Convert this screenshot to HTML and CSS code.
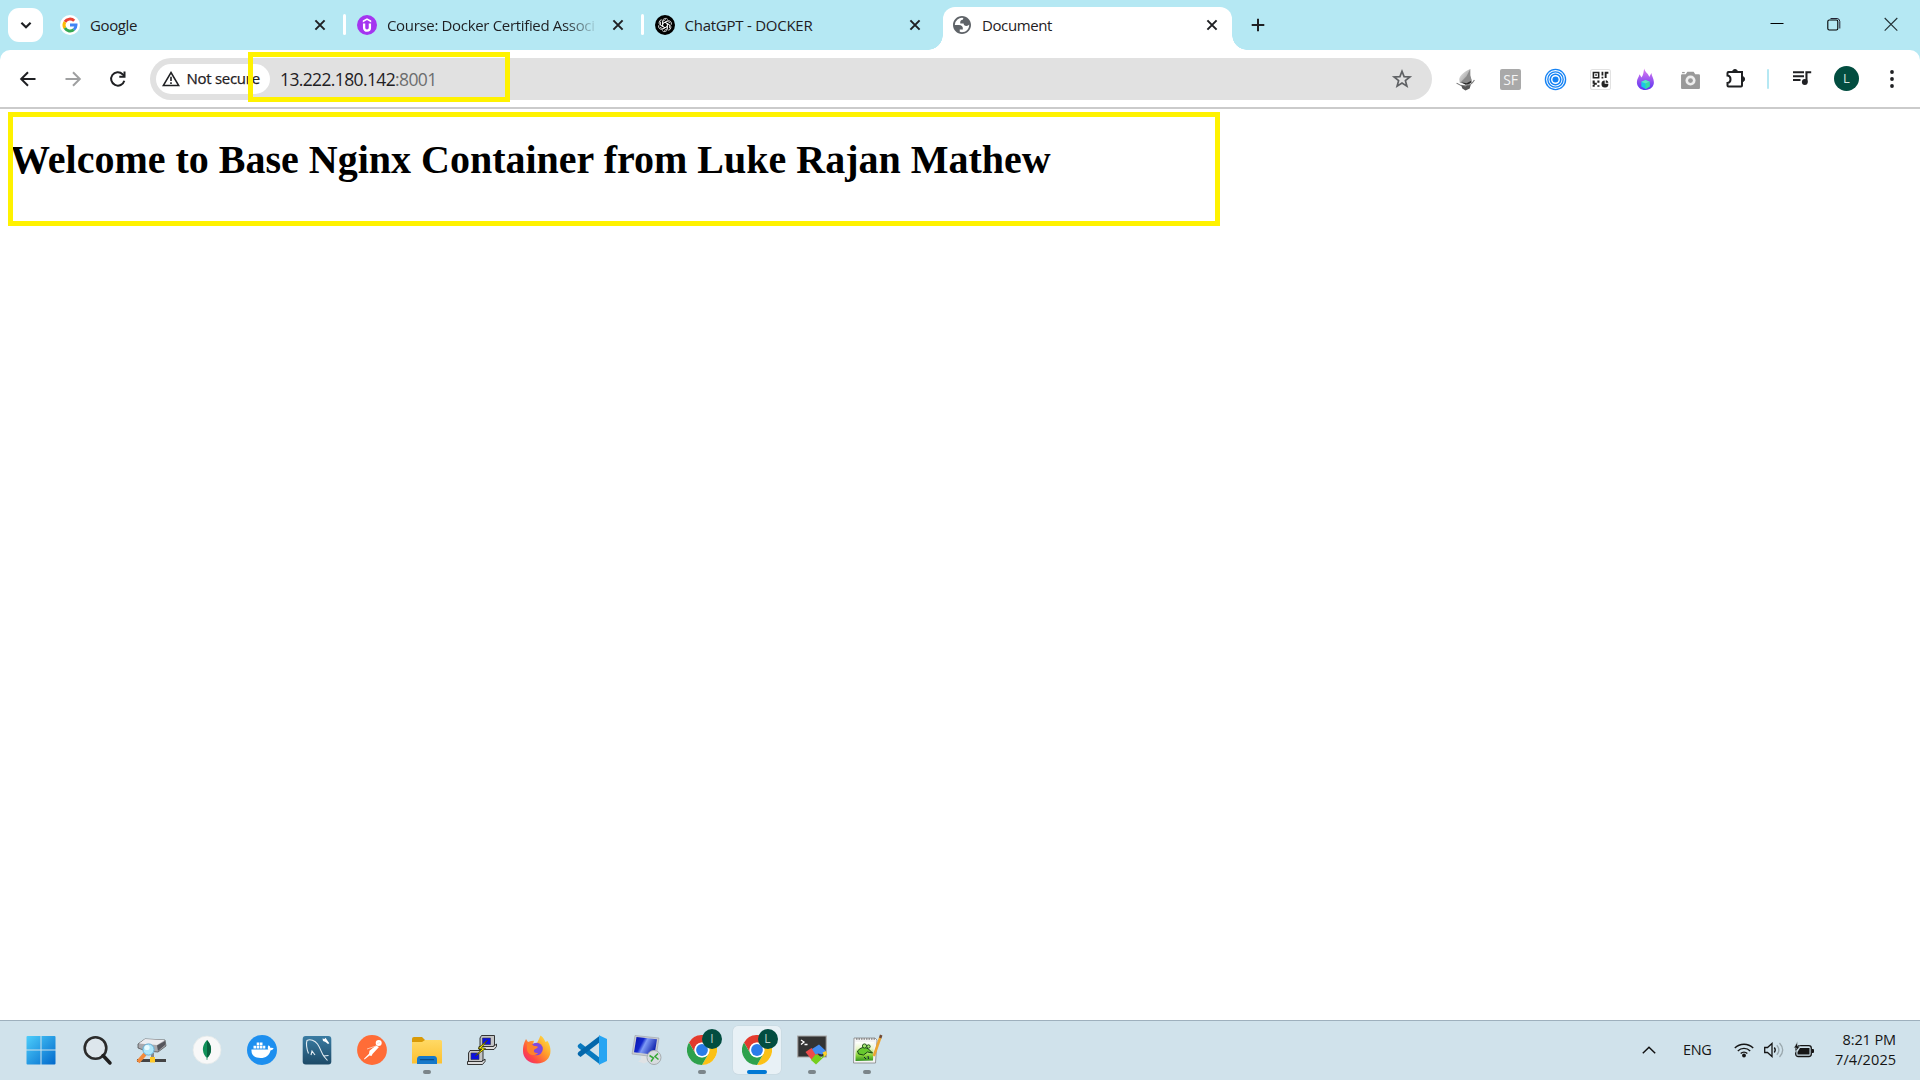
FILE: index.html
```html
<!DOCTYPE html>
<html lang="en">
<head>
<meta charset="utf-8">
<title>Document</title>
<link rel="stylesheet" href="styles.css">
</head>
<body>
<svg class="defs" width="0" height="0" aria-hidden="true">
  <defs>
    <symbol id="x" viewBox="0 0 20 20"><path d="M5.4 5.4l9.2 9.2M14.6 5.4l-9.2 9.2" stroke="#1f2023" stroke-width="2" fill="none"/></symbol>
    <symbol id="chrome" viewBox="0 0 30 30">
      <circle cx="15" cy="15" r="15" fill="#fff"/>
      <path d="M2 7.5A15 15 0 0 1 28 7.5H15A7.5 7.5 0 0 0 8.5 18.8z" fill="#e33b2e"/>
      <path d="M28 7.5A15 15 0 0 1 15 30l6.5-11.3A7.5 7.5 0 0 0 15 7.5z" fill="#fbc116"/>
      <path d="M15 30A15 15 0 0 1 2 7.5l6.5 11.3a7.5 7.5 0 0 0 13 0z" fill="#2da14c"/>
      <circle cx="15" cy="15" r="7.3" fill="#fff"/><circle cx="15" cy="15" r="5.9" fill="#2b7de9"/>
    </symbol>
    <linearGradient id="gWin" gradientUnits="userSpaceOnUse" x1="0" y1="0" x2="30" y2="30"><stop offset="0" stop-color="#4fd0fc"/><stop offset="1" stop-color="#0067cb"/></linearGradient>
    <linearGradient id="gFire" x1="0" y1="0" x2="0" y2="1"><stop offset="0" stop-color="#e07bf0"/><stop offset="1" stop-color="#5a35f0"/></linearGradient>
    <linearGradient id="gFolder" x1="0" y1="0" x2="0" y2="1"><stop offset="0" stop-color="#ffd965"/><stop offset="1" stop-color="#fcc02f"/></linearGradient>
    <linearGradient id="gSql" x1="0" y1="0" x2="0" y2="1"><stop offset="0" stop-color="#3a7ca3"/><stop offset="1" stop-color="#1d4a67"/></linearGradient>
    <linearGradient id="gFox" x1="1" y1="0" x2="0" y2="1"><stop offset="0" stop-color="#fff04a"/><stop offset=".4" stop-color="#ffa02a"/><stop offset=".72" stop-color="#ff4a42"/><stop offset="1" stop-color="#e9208a"/></linearGradient>
    <linearGradient id="gScreen" x1="0" y1="0" x2="1" y2=".4"><stop offset="0" stop-color="#0712a8"/><stop offset=".4" stop-color="#1226cc"/><stop offset=".55" stop-color="#7f9bf5"/><stop offset="1" stop-color="#1528b0"/></linearGradient>
    <linearGradient id="gGray" x1="0" y1="0" x2="1" y2="1"><stop offset="0" stop-color="#f4f4f4"/><stop offset="1" stop-color="#777"/></linearGradient>
    <linearGradient id="gPaper" x1="0" y1="0" x2="0" y2="1"><stop offset="0" stop-color="#fff"/><stop offset=".35" stop-color="#e9f5c9"/><stop offset=".7" stop-color="#8ad43a"/><stop offset="1" stop-color="#2f8f1c"/></linearGradient>
  </defs>
</svg>

<header class="tabstrip">
  <button class="tab-search"><svg width="20" height="20" viewBox="0 0 20 20"><path d="M5.4 7.8l4.600 4.400 4.600-4.400" fill="none" stroke="#1f2023" stroke-width="2.200"/></svg></button>
  <nav class="tabs">
    <div class="tab">
      <svg class="favicon" viewBox="0 0 20 20"><circle cx="10" cy="10" r="10" fill="#fff"/><g fill="none" stroke-width="3"><path d="M4.900 6.900A6 6 0 0 1 14.200 5.800" stroke="#ea4335"/><path d="M4.900 13.100A6 6 0 0 1 4.900 6.900" stroke="#fbbc05"/><path d="M4.900 13.100A6 6 0 0 0 13.900 14.600" stroke="#34a853"/><path d="M10 10h6a6 6 0 0 1-2.100 4.600" stroke="#4285f4"/></g></svg>
      <span class="tab-title">Google</span><svg class="close"><use href="#x"/></svg>
    </div>
    <div class="tab divided">
      <svg class="favicon" viewBox="0 0 20 20"><circle cx="10" cy="10" r="10" fill="#a435f0"/><path d="M5.800 5.600L10 3.200l4.200 2.400v1.800L10 5.100 5.800 7.400z" fill="#fff"/><path d="M7.100 8.600v4.200a2.900 2.900 0 0 0 5.800 0V8.600" fill="none" stroke="#fff" stroke-width="2.300"/></svg>
      <span class="tab-title fade">Course: Docker Certified Associ</span><svg class="close"><use href="#x"/></svg>
    </div>
    <div class="tab divided">
      <svg class="favicon" viewBox="0 0 20 20"><circle cx="10" cy="10" r="10" fill="#000"/><g fill="none" stroke="#fff" stroke-width=".75"><path id="petal" d="M7.600 11.400V6.200a2.900 2.900 0 0 1 5.300-1.600M7.600 8.700l4.500-2.600 3 1.700"/><use href="#petal" transform="rotate(60 10 10)"/><use href="#petal" transform="rotate(120 10 10)"/><use href="#petal" transform="rotate(180 10 10)"/><use href="#petal" transform="rotate(240 10 10)"/><use href="#petal" transform="rotate(300 10 10)"/></g></svg>
      <span class="tab-title chat">ChatGPT - DOCKER</span><svg class="close"><use href="#x"/></svg>
    </div>
    <div class="tab active">
      <svg class="favicon" viewBox="0 0 20 20"><path transform="translate(-.8 -.8) scale(.9)" fill-rule="evenodd" fill="#5f6368" d="M12 2C6.480 2 2 6.480 2 12s4.480 10 10 10 10-4.480 10-10S17.520 2 12 2zM4 12h4.400c3.407.022 4.922 1.730 4.543 5.127H9.488v2.470a8.004 8.004 0 0 0 10.498-8.083C19.327 12.504 18.332 13 17 13c-2.137 0-3.206-.916-3.206-2.750h-3.748c-.274-2.728.683-4.092 2.870-4.092 0-.975.327-1.597.811-1.970A8 8 0 0 0 4 12z"/></svg>
      <span class="tab-title doc">Document</span><svg class="close"><use href="#x"/></svg>
    </div>
  </nav>
  <button class="new-tab"><svg width="20" height="20" viewBox="0 0 20 20"><path d="M10 3.700v12.600M3.700 10h12.600" stroke="#1f2023" stroke-width="2"/></svg></button>
  <div class="window-controls">
    <svg viewBox="0 0 14 14"><path d="M.5 6.500h13" stroke="#000"/></svg>
    <svg viewBox="0 0 14 14"><path d="M3.500 1.500H10A3 3 0 0 1 12.800 4.500v7" fill="none" stroke="#223"/><rect x=".8" y="3" width="10" height="10" rx="1.500" fill="none" stroke="#000" stroke-width="1.100"/></svg>
    <svg viewBox="0 0 14 14"><path d="M.7 1l12.600 12.600M13.300 1L.7 13.600" stroke="#223034" stroke-width="1.100"/></svg>
  </div>
</header>

<section class="toolbar">
  <div class="nav-buttons">
    <svg viewBox="0 0 20 20"><path d="M17.500 10H3.500M10 3.200L3.200 10l6.800 6.800" fill="none" stroke="#1f2023" stroke-width="2"/></svg>
    <svg viewBox="0 0 20 20"><path d="M2.500 10h14M10 3.200l6.800 6.800-6.800 6.800" fill="none" stroke="#9fa0a1" stroke-width="2"/></svg>
    <svg viewBox="0 0 20 20"><path d="M16.300 11.700A6.700 6.700 0 1 1 14.600 5.200L16.500 7" fill="none" stroke="#1f2023" stroke-width="2"/><path d="M17.500 2.500v6.200h-6.200V6.800h4.200V2.500z" fill="#1f2023"/></svg>
  </div>
  <div class="omnibox">
    <div class="chip"><svg width="18" height="16" viewBox="0 0 18 16"><path d="M9 1.500L16.700 14.600H1.300z" fill="none" stroke="#1f2023" stroke-width="1.500"/><path d="M9 5.800v4.200M9 11.200v1.700" stroke="#1f2023" stroke-width="1.600"/></svg><span>Not secure</span></div>
    <div class="url">13.222.180.142<span>:8001</span></div>
    <svg class="star" viewBox="0 0 20 20"><path d="M10 2.300l2.100 5.300 5.800.4-4.500 3.600 1.500 5.600-4.900-3.100-4.900 3.100 1.500-5.600L2.100 8l5.800-.4z" fill="none" stroke="#5f6164" stroke-width="1.700"/></svg>
  </div>
  <div class="extensions">
    <svg viewBox="0 0 20 20"><path d="M14.500 0C9 2.500 5 5.500 4 9.500L4.500 13l8 2 3.500-3-1.500-5z" fill="url(#gGray)"/><path d="M14.500 0L11 7l-6 6 6 1 5-3-1.500-5z" fill="#8b8b8b"/><path d="M1.500 13.500q4 3 9 2.500t8-5.500" fill="none" stroke="#777" stroke-width="1"/><path d="M6 12.500l5 1 4-2 1 1-3 2-3 .5z" fill="#2c2c2c"/><path d="M6 16l4 .5 5-1.500-1 3.500-4 2-3-2z" fill="#555"/></svg>
    <div class="sf">SF</div>
    <svg viewBox="0 0 20 20"><g fill="none" stroke="#1683f4" stroke-width="1.300"><circle cx="10" cy="10" r="9.600"/><circle cx="10" cy="10" r="7.300"/><circle cx="10" cy="10" r="5" stroke-width="1.500"/></g><circle cx="10" cy="10" r="2.900" fill="#1683f4"/></svg>
    <svg viewBox="0 0 20 20"><rect x=".5" y=".5" width="19" height="19" rx="2" fill="#fff" stroke="#e2e2e2"/><g fill="#222"><path d="M2.500 2.500h6.500v6.500H2.500zM4 4v3.500h3.500V4z" fill-rule="evenodd"/><path d="M5 5h1.500v1.500H5zM11 2.500h1.700v3.800H11zM14 2.500h3.500v2h-1.700v4H14zM11 7.300h1.700V9H11zM2.500 11h2v2h2v2h-2v2h-2v-2h1v-1h-1zM7 11h2v2H7zM7 15.500h2V17H7z"/><path d="M14 11v3h3.500a3.300 3.300 0 1 1-3.500-3zM15 10.700c1.500.2 2.300 1 2.500 2.300H15z"/></g></svg>
    <svg viewBox="0 0 20 20"><path d="M8.700-.5C9.500 3 13 4.500 13.500 7.500l2.200-3.800c0 3 2.300 5 2.300 9 0 4.300-3.500 7.300-8 7.300s-8.200-3-8.200-7.500c0-3 1.700-4.300 2.500-7.500l1.900 3C8 5.500 8.200 3 8.700-.5z" fill="url(#gFire)"/><path d="M6 12.200l4-1.700 4 1.700v4.500L10 19l-4-2.300z" fill="#19c6e6"/><path d="M6 12.200l4 1.500 4-1.500-4-1.700z" fill="#5fe8c0"/><path d="M10 13.700V19l4-2.300v-4.500z" fill="#38dca0"/></svg>
    <svg viewBox="0 0 20 20"><path d="M2 5h3.500L7 2.500h6L14.500 5H18q1 0 1 1v12q0 1-1 1H2q-1 0-1-1V6q0-1 1-1z" fill="#999"/><circle cx="10" cy="11" r="4.800" fill="#eee"/><circle cx="10" cy="11" r="2.300" fill="#999"/><path d="M2 2.800h2.500V4H2z" fill="#999"/></svg>
    <svg class="puzzle" viewBox="0 0 22 22"><path d="M3.500 4H17v13.500q0 1-1 1H3.500q-1 0-1-1V15c4-.5 4-7 0-7.500V5q0-1 1-1z" fill="none" stroke="#1f2023" stroke-width="2"/><path d="M7.500 4a2.500 2.500 0 0 1 5 0zM17 8.500a2.600 2.600 0 0 1 0 5.200z" fill="#1f2023" stroke="#1f2023"/></svg>
  </div>
  <div class="profile">
    <i class="divider"></i>
    <svg class="media" viewBox="0 0 20 20"><path d="M1 3.300h11M1 7.200h11M1 11h7.500" stroke="#1f2023" stroke-width="2"/><path d="M13.400 2.300h5.800v2h-3.700v9.200h-2z" fill="#1f2023"/><circle cx="12.800" cy="13" r="2.900" fill="#1f2023"/></svg>
    <div class="avatar">L</div>
    <svg class="menu" viewBox="0 0 20 20"><g fill="#1f2023"><circle cx="10" cy="3" r="1.900"/><circle cx="10" cy="10" r="1.900"/><circle cx="10" cy="17" r="1.900"/></g></svg>
  </div>
</section>

<main class="page">
  <h1>Welcome to Base Nginx Container from Luke Rajan Mathew</h1>
</main>

<footer class="taskbar">
  <div class="apps">
    <div class="app start"><svg viewBox="0 0 30 30"><path d="M1.500 1h13v13.500h-14V2q0-1 1-1zM15.500 1h13q1 0 1 1v12.500h-14zM.5 15.500h14v14h-13q-1 0-1-1zM15.500 15.500h14v13q0 1-1 1h-13z" fill="url(#gWin)"/></svg></div>
    <div class="app"><svg viewBox="0 0 30 30"><circle cx="13.500" cy="13" r="10.800" fill="#dde6ec" stroke="#2b2b2b" stroke-width="2.600"/><path d="M21 20.500l7 7.500" stroke="#1f1f1f" stroke-width="3.500" stroke-linecap="round"/></svg></div>
    <div class="app"><svg viewBox="0 0 30 30"><path d="M0 25.500h29" stroke="#444" stroke-width="3"/><path d="M1 9l7-5 20 1 1 6-8 6-12-1-8-3z" fill="#a9a9ae" stroke="#444" stroke-width=".7"/><path d="M2 8.500l6-4.500 20 1-8 5z" fill="#ececf0"/><path d="M20 10.500l8-4.500v4l-7 6z" fill="#55555c"/><path d="M15.500 18v6" stroke="#888" stroke-width="3"/><rect x="13" y="22" width="5" height="5.500" fill="#ffc928"/><path d="M1 27l7-8" stroke="#f08a3c" stroke-width="4"/><circle cx="11.500" cy="14.500" r="5.600" fill="#aee6fb" stroke="#65aed6"/><circle cx="10" cy="12.500" r="2.600" fill="#e8fbff"/></svg></div>
    <div class="app"><svg viewBox="0 0 30 30"><circle cx="15" cy="15" r="14" fill="#f8f8f8" stroke="#e2e8e9" stroke-width=".8"/><path d="M15 5c3.500 4 4.300 7 4 10.500-.3 3-1.700 5.500-3.500 7l-.2 2.500h-.6l-.2-2.500c-1.800-1.500-3.200-4-3.500-7C10.700 12 11.500 9 15 5z" fill="#10925a"/><path d="M15 5c3.500 4 4.300 7 4 10.500-.3 3-1.700 5.500-3.500 7H15z" fill="#08623e"/></svg></div>
    <div class="app"><svg viewBox="0 0 30 30"><circle cx="15" cy="15" r="15" fill="#1d8fef"/><path d="M4.500 14.500h16.800q-1.200-2 .3-4.200 1.800 1 1.900 2.700 1.800-.4 3.200.3-.9 2-3.200 2.100C22.300 20.200 19 23 13.500 23 7.500 23 4 20.500 4.500 14.500z" fill="#fff"/><path d="M6.500 10.800h2.600v2.700H6.500zM9.700 10.800h2.600v2.700H9.700zM12.900 10.800h2.600v2.700h-2.600zM16.100 10.800h2.200v2.700h-2.200zM9.700 7.600h2.600v2.600H9.700zM12.900 7.600h2.600v2.600h-2.600z" fill="#fff"/></svg></div>
    <div class="app"><svg viewBox="0 0 30 30"><rect x=".7" y="1" width="28.600" height="28.600" rx="3" fill="url(#gSql)"/><path d="M6.500 18.500C4.500 14 4 8 5 5.500c3-2 8 0 10.500 3.500 3.500 5 4 10 7 13l3 3.500M9 20l1-4 3 4M26.500 20.500l-5 .5" fill="none" stroke="#e4edf3" stroke-width="1.100"/><path d="M20.500 3.500l2 .5 1-1.200 2 3 1.800 2.500-1.300.7-2.500-2-2.500-1z" fill="#fff"/></svg></div>
    <div class="app"><svg viewBox="0 0 30 30"><circle cx="15" cy="15" r="14.900" fill="#ff6c37"/><circle cx="21.700" cy="8" r="3" fill="#fff"/><path d="M19 10.500l3 1.500-6.500 7-1 2-2-.5-5 4-.5-.7 5-5 .5-3z" fill="#fff"/><path d="M10 14l9-3M20 8.500l3-1" stroke="#ffd5c4" stroke-width=".8"/></svg></div>
    <div class="app running"><svg viewBox="0 0 30 30"><path d="M0 4q0-2 2-2h8l3 3v4H0z" fill="#d99a07"/><path d="M0 7h10l3-2h15.500q1.500 0 1.500 1.500v22H0z" fill="url(#gFolder)"/><path d="M5 29v-4.500Q5 21 8 21h14q3 0 3 3.500V29z" fill="#1678c9"/><path d="M8.500 24.700h13" stroke="#0b4d8a" stroke-width="1.300" stroke-linecap="round"/></svg></div>
    <div class="app"><svg viewBox="0 0 30 30"><g id="pc"><path d="M14.500.5h13v9.500L25 12.500H13V3z" fill="#c4c4c4" stroke="#222" stroke-width=".9"/><path d="M15.500 3h8v6.500h-8z" fill="#0a10e0" stroke="#334" stroke-width=".6"/><path d="M12 11.500h14.500l3-2.500v2.500L27 14.500H12z" fill="#dcdcdc" stroke="#222" stroke-width=".9"/></g><use href="#pc" x="-11.500" y="15"/><path d="M20.500 5l-9.500 8.500 4 .5-6.500 7 10-7.500-4-.8z" fill="#fff200" stroke="#444100" stroke-width=".8"/></svg></div>
    <div class="app"><svg viewBox="0 0 30 30"><path d="M15 28.500C6 28.500 1 22.500 1 16 1 10 2.500 7 4 4l2 3 3-1 3-.3-1 3.300 4-1 2-4 1.500-3.500c3 2 4 4.500 5 6.500l2-1c2.500 4 3 7 3 10 0 7.500-5.500 12.500-13.500 12.500z" fill="url(#gFox)"/><circle cx="14.500" cy="14" r="6.300" fill="#8148dc"/><path d="M5 9c3-1 5 0 7 2 2 .2 3.500 0 4 1-1 2-3 1.500-4 3-.6 2 1 3.500 4 3-3 4-11 2-11-4z" fill="#ff822b"/></svg></div>
    <div class="app"><svg viewBox="0 0 30 30"><path d="M1 10l2.500-2L23 23v6.500L1.500 13q-1.500-1.500-.5-3z" fill="#0879bf"/><path d="M1 20l2.500 2L23 7V.5L1.500 17q-1.500 1.500-.5 3z" fill="#0367ab"/><path d="M22 .2L30 4v22l-8 3.800V.2z" fill="#27a5f3"/></svg></div>
    <div class="app"><svg viewBox="0 0 30 30"><path d="M9 20l7 2 1 4-5 2.500-6-2 3-2z" fill="#dfe2e5"/><path d="M3 .5l24 2.500-3 19-24-3z" fill="#c9ccd1" stroke="#91959c" stroke-width=".5"/><path d="M4.500 2l20.500 2.200-2.500 15.500-20.500-2.500z" fill="url(#gScreen)"/><circle cx="22" cy="22.500" r="7" fill="#d8dcdf" stroke="#a7adb0"/><path d="M17.500 20.500l4 2.500-2.500 3.500M26 18.500l-3 3 3.500 3" fill="none" stroke="#38a838" stroke-width="1.500"/></svg></div>
    <div class="app running"><svg viewBox="0 0 30 30"><use href="#chrome"/></svg><b class="badge">I</b></div>
    <div class="app running current"><svg viewBox="0 0 30 30"><use href="#chrome"/></svg><b class="badge">L</b></div>
    <div class="app running"><svg viewBox="0 0 30 30"><path d="M.7 1h28.600v21H.7z" fill="#333" stroke="#aaa" stroke-width="1.200"/><path d="M4 5l3 2-3 2.500M7.500 9.500h3" fill="none" stroke="#fff" stroke-width="1.300"/><path d="M8.500 17l6-4 7 6-4 5-2 2z" fill="#ed4b4b"/><path d="M15 14l7-4.500 7 6.500-4 3.500-4-1-2.500 1z" fill="#438cf1"/><path d="M14 25l4.500-5.500 3 .5 3 3 3.500-5 2 1-11 10.500z" fill="#76cf1c"/><path d="M25.500 17.500l3.500-1.500 1 3-2.500 3z" fill="#ffd02b"/></svg></div>
    <div class="app running"><svg viewBox="0 0 30 30"><path d="M2 3h21l2 2-1.500 23L1.500 28z" fill="#f4f4f4" stroke="#777" stroke-width=".7"/><path d="M4 4h20" stroke="#555" stroke-dasharray="1.500 1"/><path d="M3.500 7h18.500l-1 18.500-17.500.5z" fill="url(#gPaper)"/><path d="M5.500 16q5-6 11-2l4 4-5-1-4 3-5-1z" fill="#67c82e" stroke="#194712" stroke-width="1"/><circle cx="12.500" cy="11" r="2.100" fill="#a6e873" stroke="#194712" stroke-width=".9"/><circle cx="16.500" cy="11.500" r="1.700" fill="#a6e873" stroke="#194712" stroke-width=".9"/><path d="M12 22l2 2m2-3l.5 3" stroke="#123"/><path d="M28.300 2.500L21.800 21" stroke="#eca532" stroke-width="2.600"/><path d="M29.200 0l-1 3" stroke="#704a35" stroke-width="2.600"/></svg></div>
  </div>
  <div class="tray">
    <svg class="up" viewBox="0 0 14 8"><path d="M.8 7.200L7 1.300l6.200 5.900" fill="none" stroke="#111" stroke-width="1.500"/></svg>
    <span class="lang">ENG</span>
    <svg class="status" viewBox="0 0 20 16"><path d="M.8 6a13 13 0 0 1 18.400 0M3.800 8.900a8.800 8.800 0 0 1 12.400 0M6.700 11.600a4.800 4.800 0 0 1 6.600 0" fill="none" stroke="#151515" stroke-width="1.400"/><circle cx="10" cy="13.500" r="1.900" fill="#151515"/></svg>
    <svg class="status" viewBox="0 0 20 16"><path d="M.7 5.500h2.800L8 1.500v13l-4.500-4H.7z" fill="none" stroke="#151515" stroke-width="1.300"/><path d="M10.300 5.500q2 2.500 0 5" fill="none" stroke="#151515" stroke-width="1.300"/><path d="M12.800 3.200q4.200 4.800 0 9.600M15.500 1q6.400 7 0 14" fill="none" stroke="#9aa8ae" stroke-width="1.300"/></svg>
    <svg class="status battery" viewBox="0 0 20 16"><rect x="1.700" y="3.700" width="15.600" height="10.800" rx="2.500" fill="none" stroke="#151515" stroke-width="1.300"/><path d="M6 6h9.500v6.500H3.500V10zM18 7h1q1 0 1 1v2q0 1-1 1h-1z" fill="#151515"/><path d="M3.500-.5L-.2 6h2.500L1 10.500 6.300 4H3.500z" fill="#151515" stroke="#cfe2ea" stroke-width=".6"/></svg>
    <div class="clock"><div class="time">8:21 PM</div><div class="date">7/4/2025</div></div>
  </div>
</footer>

<div class="mark mark-url"></div>
<div class="mark mark-heading"></div>
</body>
</html>
```
FILE: styles.css
```css
* { box-sizing: border-box; }
html, body { height: 100%; }
body {
  margin: 0;
  display: flex;
  flex-direction: column;
  overflow: hidden;
  position: relative;
  background: #b5e8f3;
  color: #1f2023;
  font-family: "Open Sans", "Noto Sans", sans-serif;
}
svg { display: block; flex: none; overflow: visible; }
.defs { position: absolute; }
button { border: 0; padding: 0; background: none; display: flex; align-items: center; justify-content: center; }

.tabstrip { height: 50px; flex: none; display: flex; align-items: flex-start; padding-left: 8px; }
.tab-search { width: 35px; height: 34px; margin-top: 8px; border-radius: 11px; background: #fff; }
.tabs { display: flex; margin-left: 7px; height: 50px; }
.tab { width: 297.5px; height: 50px; padding: 0 17.5px 0 10px; display: flex; align-items: center; position: relative; }
.tab.divided::before { content: ""; position: absolute; left: -4.5px; top: 14px; width: 3px; height: 21px; border-radius: 1.5px; background: #fff; }
.tab.divided { padding-left: 9.5px; }
.favicon { width: 20px; height: 20px; }
.tab-title { margin-left: 10px; font-size: 15px; line-height: 22px; white-space: nowrap; letter-spacing: -0.4px; }
.tab-title.chat { letter-spacing: -0.25px; }
.tab-title.fade { letter-spacing: -0.33px; -webkit-mask-image: linear-gradient(90deg, #000 178px, transparent 212px); mask-image: linear-gradient(90deg, #000 178px, transparent 212px); }
.close { width: 20px; height: 20px; margin-left: auto; }
.tab.active { height: 43px; width: 289px; margin: 7px 0 0 .5px; padding: 0 10px 7px 9px; border-radius: 12px 12px 0 0; background: #fff; }
.tab.active::before, .tab.active::after { content: ""; position: absolute; bottom: 0; width: 15px; height: 15px; }
.tab.active::before { left: -15px; background: radial-gradient(circle at 0 0, transparent 14.5px, #fff 15px); }
.tab.active::after { right: -15px; background: radial-gradient(circle at 100% 0, transparent 14.5px, #fff 15px); }
.new-tab { width: 34px; height: 50px; margin-left: 9px; }
.window-controls { display: flex; gap: 43px; margin: 17px 22px 0 auto; }
.window-controls svg { width: 14px; height: 14px; }

.toolbar { height: 59px; flex: none; display: flex; align-items: center; background: #fff; border-bottom: 2px solid #cbcbcb; border-radius: 10px 10px 0 0; padding-left: 18px; }
.nav-buttons { display: flex; gap: 25px; width: 132px; }
.nav-buttons svg { width: 20px; height: 20px; }
.omnibox { width: 1282px; height: 42px; border-radius: 21px; background: #e1e1e1; display: flex; align-items: center; padding: 0 20px 0 6px; margin-top: 1px; }
.chip { width: 114px; height: 30px; border-radius: 15px; background: #fff; display: flex; align-items: center; gap: 6.5px; padding-left: 6px; font-size: 15px; font-weight: 500; letter-spacing: -0.28px; white-space: nowrap; -webkit-text-stroke: .25px #1f2023; }
.chip span { margin-top: -2px; }
.url { margin-left: 10px; font-size: 17.5px; line-height: 24px; letter-spacing: -0.63px; }
.url span { color: #6c6d6e; }
.star { width: 20px; height: 20px; margin-left: auto; }
.extensions { display: flex; align-items: center; gap: 24px; margin: 1px 0 0 23px; }
.extensions svg, .sf { width: 21px; height: 21px; }
.extensions .puzzle { width: 22px; height: 22px; }
.sf { background: #a9a9a9; border-radius: 2px; color: #f5f5f5; font-size: 14px; line-height: 21px; text-align: center; letter-spacing: -0.2px; }
.profile { display: flex; align-items: center; margin-left: 20px; }
.divider { width: 2px; height: 20px; background: #b5e8f3; border-radius: 1px; }
.media { width: 20px; height: 20px; margin-left: 23px; }
.avatar { width: 25px; height: 25px; border-radius: 50%; background: #024d40; color: #d5e3df; font-size: 13px; line-height: 25px; text-align: center; margin-left: 22px; }
.menu { width: 20px; height: 20px; margin-left: 23px; }

.page { flex: 1; background: #fff; padding: 28px 10px; }
h1 { margin: 0; color: #000; font: bold 40px/46px "Liberation Serif", serif; white-space: nowrap; }

.taskbar { height: 60px; flex: none; display: flex; align-items: center; justify-content: space-between; background: #d0e2eb; border-top: 1px solid #9eb0bd; padding: 0 24px 2px 13px; }
.apps { display: flex; }
.app { width: 55px; height: 48px; display: flex; align-items: center; justify-content: center; position: relative; }
.app.start { margin-right: 1px; }
.app svg { width: 30px; height: 30px; }
.app.current { margin: 0 3.5px; width: 48px; border-radius: 5px; background: #e8f1f6; box-shadow: 0 0 0 .5px #c6d5de; }
.app.running::after { content: ""; position: absolute; bottom: 0; left: 50%; width: 8px; height: 4px; margin-left: -4px; border-radius: 2px; background: #7b858a; }
.app.current::after { width: 20px; margin-left: -10px; background: #0078d4; }
.badge { position: absolute; left: 28px; top: 3px; width: 20px; height: 20px; border-radius: 50%; background: #024d40; color: #b6cfc9; font-size: 12px; line-height: 20px; font-weight: 400; text-align: center; }
.current .badge { left: 25px; }
.tray { display: flex; align-items: center; font-size: 14.5px; color: #151515; }
.up { width: 14px; height: 8px; margin-right: 27px; }
.lang { width: 28px; margin-right: 23px; letter-spacing: -0.4px; }
.status { width: 20px; height: 16px; margin-right: 10px; }
.battery { margin-right: 21px; }
.clock { width: 61px; text-align: right; line-height: 20px; white-space: nowrap; }
.time { letter-spacing: -0.1px; }
.date { letter-spacing: 0.1px; }

.mark { position: absolute; border: 5px solid #fff200; }
.mark-url { left: 248px; top: 52px; width: 262px; height: 50px; }
.mark-heading { left: 8px; top: 112px; width: 1212px; height: 114px; }
```
